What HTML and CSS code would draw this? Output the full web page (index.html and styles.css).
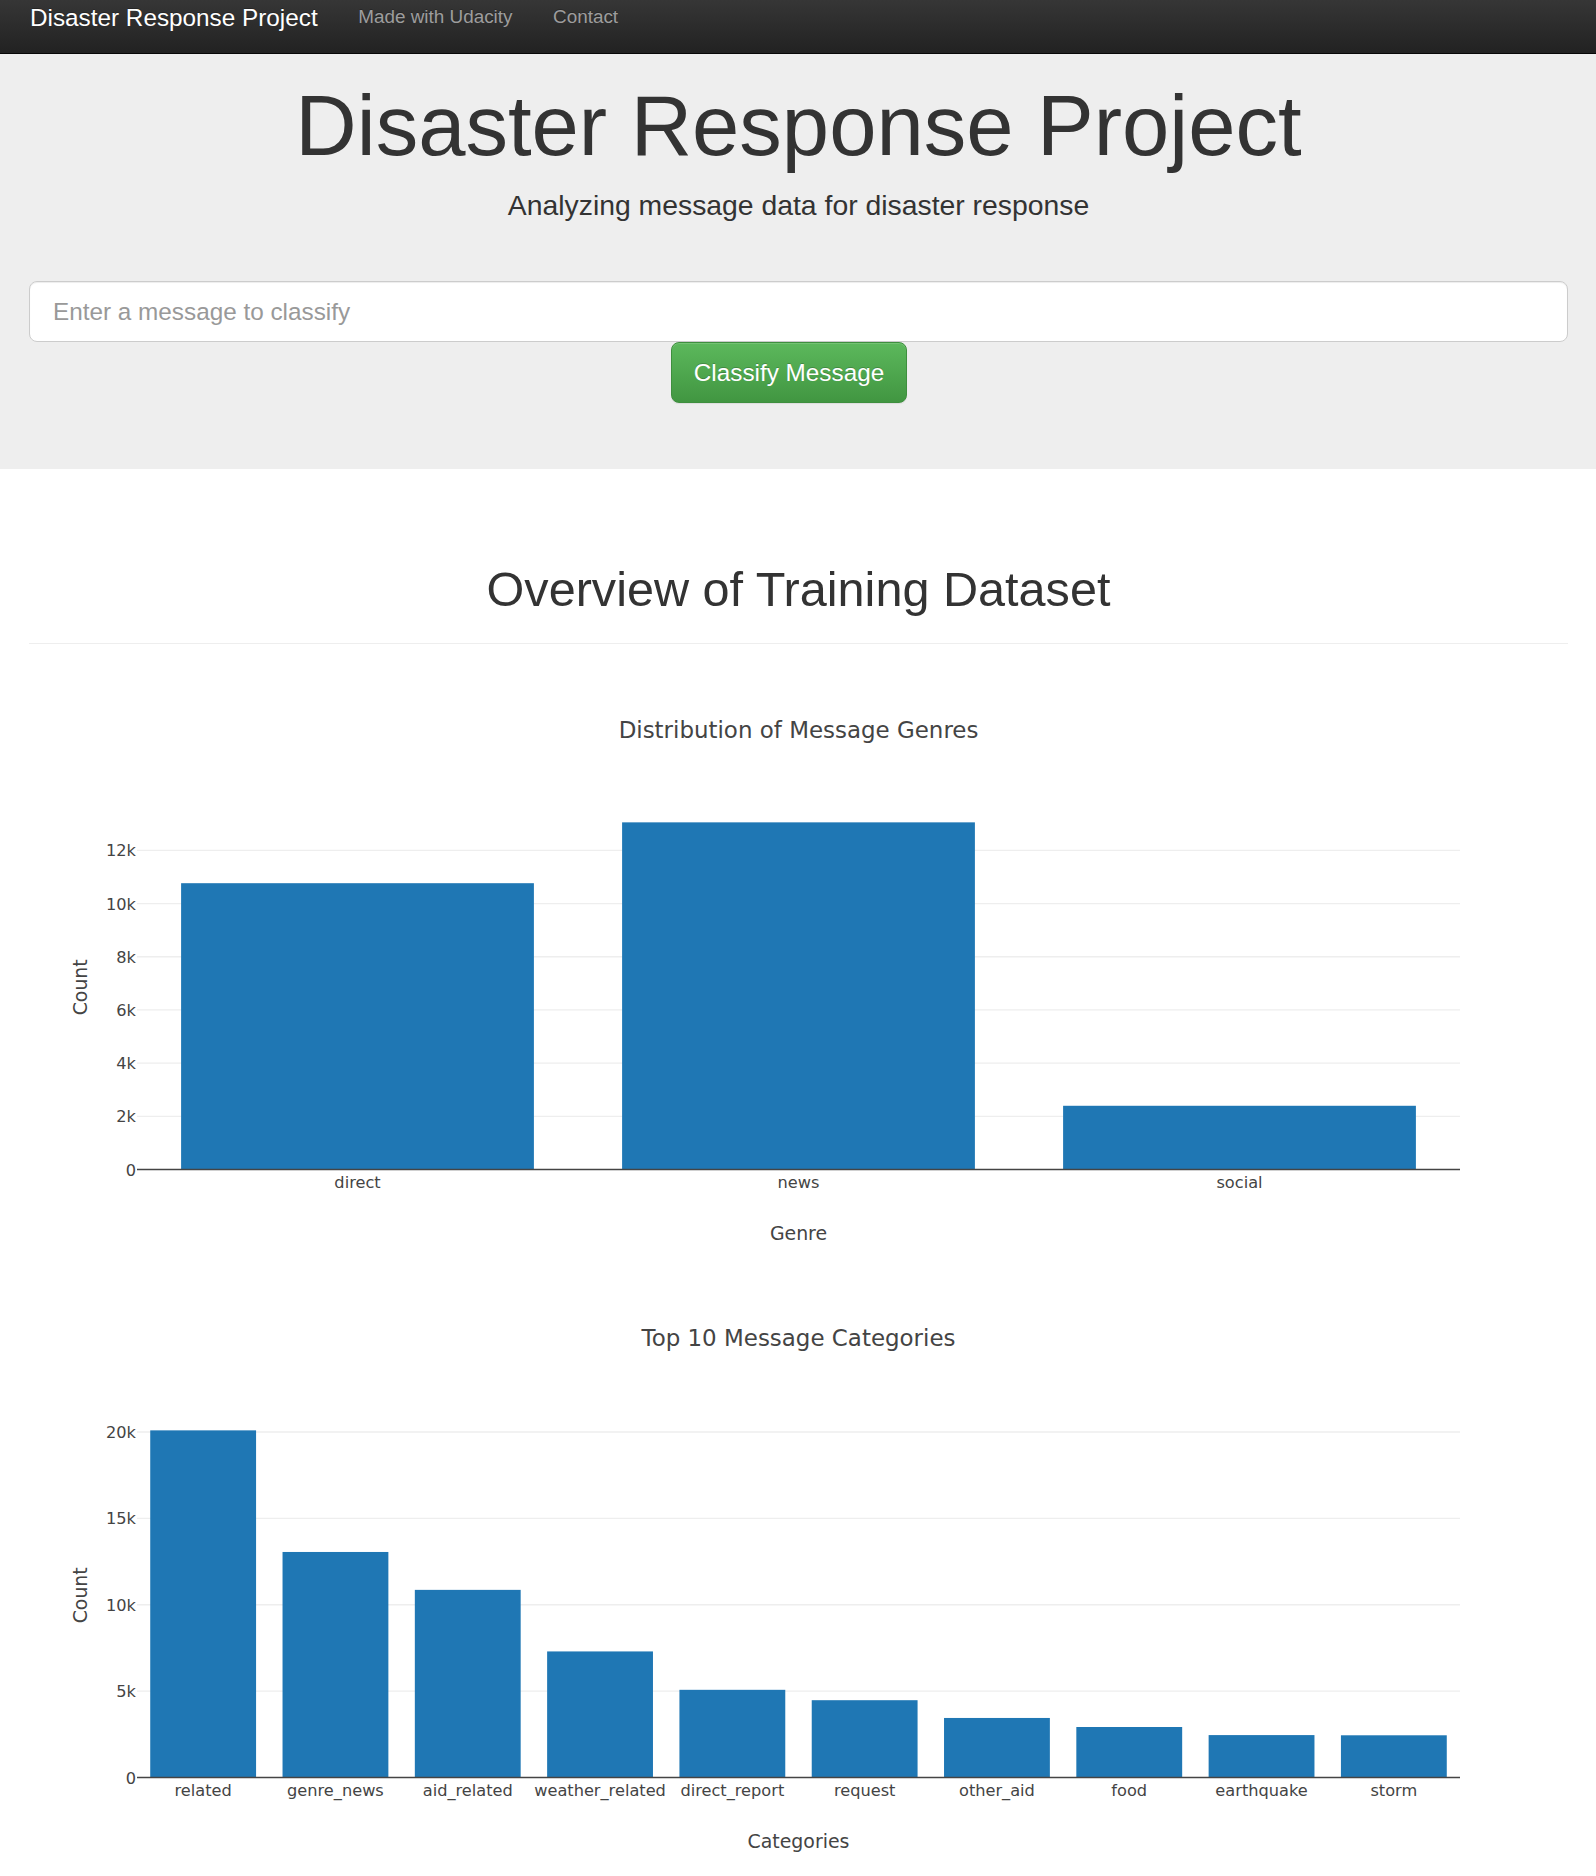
FILE: index.html
```html
<!DOCTYPE html>
<html lang="en">
<head>
<meta charset="utf-8">
<title>Disaster Response Project</title>
<link rel="stylesheet" href="styles.css">
</head>
<body>
<nav class="navbar">
  <a class="brand" href="#">Disaster Response Project</a>
  <ul class="nav">
    <li><a href="#">Made with Udacity</a></li>
    <li><a href="#">Contact</a></li>
  </ul>
</nav>

<div class="jumbotron">
  <h1 class="jumbo-title">Disaster Response Project</h1>
  <p class="jumbo-lead">Analyzing message data for disaster response</p>
  <form class="classify-form">
    <input class="msg-input" type="text" placeholder="Enter a message to classify">
    <button class="btn-classify" type="button">Classify Message</button>
  </form>
</div>

<main class="container">
  <h1 class="section-title">Overview of Training Dataset</h1>
  <hr class="divider">

  <div class="chart">
    <svg class="plot" width="1539" height="607.5" viewBox="0 0 1539 607.5">
      <g class="grid">
        <line x1="108" x2="1431" y1="446.31" y2="446.31"/>
        <line x1="108" x2="1431" y1="393.13" y2="393.13"/>
        <line x1="108" x2="1431" y1="339.94" y2="339.94"/>
        <line x1="108" x2="1431" y1="286.76" y2="286.76"/>
        <line x1="108" x2="1431" y1="233.57" y2="233.57"/>
        <line x1="108" x2="1431" y1="180.39" y2="180.39"/>
      </g>
      <g class="bars">
        <rect x="152.1" y="213.2" width="352.8" height="286.3"/>
        <rect x="593.1" y="152.35" width="352.8" height="347.15"/>
        <rect x="1034.1" y="435.78" width="352.8" height="63.72"/>
      </g>
      <line class="zeroline" x1="108" x2="1431" y1="499.5" y2="499.5"/>
      <g class="yticks">
        <text x="107" y="505.5">0</text>
        <text x="107" y="452.3">2k</text>
        <text x="107" y="399.1">4k</text>
        <text x="107" y="345.9">6k</text>
        <text x="107" y="292.8">8k</text>
        <text x="107" y="239.6">10k</text>
        <text x="107" y="186.4">12k</text>
      </g>
      <g class="xticks">
        <text x="328.5" y="517.5">direct</text>
        <text x="769.5" y="517.5">news</text>
        <text x="1210.5" y="517.5">social</text>
      </g>
      <text class="plot-title" x="769.5" y="68">Distribution of Message Genres</text>
      <text class="axis-title" x="769.5" y="570.4">Genre</text>
      <text class="axis-title" transform="translate(57.7 317.3) rotate(-90)">Count</text>
    </svg>
  </div>

  <div class="chart">
    <svg class="plot" width="1539" height="596" viewBox="0 0 1539 596">
      <g class="grid">
        <line x1="108" x2="1431" y1="413.12" y2="413.12"/>
        <line x1="108" x2="1431" y1="326.73" y2="326.73"/>
        <line x1="108" x2="1431" y1="240.35" y2="240.35"/>
        <line x1="108" x2="1431" y1="153.96" y2="153.96"/>
      </g>
      <g class="bars">
        <rect x="121.23" y="152.36" width="105.84" height="347.14"/>
        <rect x="253.53" y="273.97" width="105.84" height="225.53"/>
        <rect x="385.83" y="311.87" width="105.84" height="187.63"/>
        <rect x="518.13" y="373.43" width="105.84" height="126.07"/>
        <rect x="650.43" y="411.82" width="105.84" height="87.68"/>
        <rect x="782.73" y="422.2" width="105.84" height="77.3"/>
        <rect x="915.03" y="439.96" width="105.84" height="59.54"/>
        <rect x="1047.33" y="449.0" width="105.84" height="50.5"/>
        <rect x="1179.63" y="457.09" width="105.84" height="42.41"/>
        <rect x="1311.93" y="457.29" width="105.84" height="42.21"/>
      </g>
      <line class="zeroline" x1="108" x2="1431" y1="499.5" y2="499.5"/>
      <g class="yticks">
        <text x="107" y="505.5">0</text>
        <text x="107" y="419.1">5k</text>
        <text x="107" y="332.7">10k</text>
        <text x="107" y="246.4">15k</text>
        <text x="107" y="160">20k</text>
      </g>
      <g class="xticks">
        <text x="174.15" y="517.5">related</text>
        <text x="306.45" y="517.5">genre_news</text>
        <text x="438.75" y="517.5">aid_related</text>
        <text x="571.05" y="517.5">weather_related</text>
        <text x="703.35" y="517.5">direct_report</text>
        <text x="835.65" y="517.5">request</text>
        <text x="967.95" y="517.5">other_aid</text>
        <text x="1100.25" y="517.5">food</text>
        <text x="1232.55" y="517.5">earthquake</text>
        <text x="1364.85" y="517.5">storm</text>
      </g>
      <text class="plot-title" x="769.5" y="68">Top 10 Message Categories</text>
      <text class="axis-title" x="769.5" y="570.4">Categories</text>
      <text class="axis-title" transform="translate(57.7 317.3) rotate(-90)">Count</text>
    </svg>
  </div>
</main>
</body>
</html>
```

FILE: styles.css
```css
* {
  box-sizing: border-box;
}

html, body {
  margin: 0;
  padding: 0;
}

body {
  font-family: "Liberation Sans", Arial, Helvetica, sans-serif;
  color: #333;
  background: #fff;
  width: 1596px;
  overflow: hidden;
}

/* ---------- navbar ---------- */
.navbar {
  display: flex;
  align-items: flex-start;
  height: 54px;
  padding-left: 9.75px;
  background: linear-gradient(to bottom, #363636 0%, #222 100%);
  border-bottom: 1px solid #080808;
}

.brand {
  display: block;
  padding: 4px 20.25px 0;
  font-size: 24.3px;
  line-height: 27px;
  color: #fff;
  text-decoration: none;
  text-shadow: 0 -1px 0 rgba(0, 0, 0, 0.25);
}

.nav {
  display: flex;
  list-style: none;
  margin: 0;
  padding: 0;
}

.nav a {
  display: block;
  padding: 3px 20.25px 0;
  font-size: 18.9px;
  line-height: 27px;
  color: #9d9d9d;
  text-decoration: none;
  text-shadow: 0 -1px 0 rgba(0, 0, 0, 0.25);
}

/* ---------- jumbotron ---------- */
.jumbotron {
  background: #eee;
  padding: 25px 28px 66px 29px;
}

.jumbo-title {
  margin: 0;
  font-size: 85px;
  line-height: 93.5px;
  font-weight: normal;
  text-align: center;
  color: #333;
}

.jumbo-lead {
  margin: 13px 0 0;
  font-size: 28.35px;
  line-height: 39.7px;
  text-align: center;
  color: #333;
}

.classify-form {
  margin: 56px 0 0;
}

.msg-input {
  display: block;
  width: 1539px;
  height: 61px;
  margin: 0;
  padding: 0 23px;
  font-family: "Liberation Sans", Arial, Helvetica, sans-serif;
  font-size: 24.3px;
  color: #555;
  background: #fff;
  border: 1px solid #ccc;
  border-radius: 8px;
  box-shadow: inset 0 1px 1px rgba(0, 0, 0, 0.075);
  outline: none;
}

.msg-input::placeholder {
  color: #999;
}

.btn-classify {
  display: block;
  margin: 0 0 0 642px;
  width: 236px;
  height: 61px;
  padding: 0;
  font-family: "Liberation Sans", Arial, Helvetica, sans-serif;
  font-size: 24.3px;
  line-height: 32px;
  color: #fff;
  background-image: linear-gradient(to bottom, #5cb85c 0%, #419641 100%);
  border: 1px solid #3e8f3e;
  border-radius: 8px;
  box-shadow: inset 0 1px 0 rgba(255, 255, 255, 0.15), 0 1px 1px rgba(0, 0, 0, 0.075);
  text-shadow: 0 -1px 0 rgba(0, 0, 0, 0.2);
  cursor: pointer;
}

/* ---------- content ---------- */
.container {
  padding: 0 28px 0 29px;
}

.section-title {
  margin: 93.4px 0 0;
  font-size: 48.6px;
  line-height: 53.5px;
  font-weight: normal;
  text-align: center;
  color: #333;
}

.divider {
  margin: 26.5px 0 0;
  height: 0;
  border: 0;
  border-top: 1px solid #eee;
}

.chart {
  width: 1539px;
}

.chart:first-of-type {
  margin-top: 26.5px;
}

.plot {
  display: block;
  font-family: "DejaVu Sans", Verdana, sans-serif;
}

.grid line {
  stroke: #eee;
  stroke-width: 1.35;
}

.bars rect {
  fill: #1f77b4;
}

.zeroline {
  stroke: #444;
  stroke-width: 1.6;
}

.yticks text {
  font-size: 16.2px;
  fill: #444;
  text-anchor: end;
}

.xticks text {
  font-size: 16.2px;
  fill: #444;
  text-anchor: middle;
}

.plot-title {
  font-size: 22.95px;
  fill: #444;
  text-anchor: middle;
}

.axis-title {
  font-size: 18.9px;
  fill: #444;
  text-anchor: middle;
}
```
